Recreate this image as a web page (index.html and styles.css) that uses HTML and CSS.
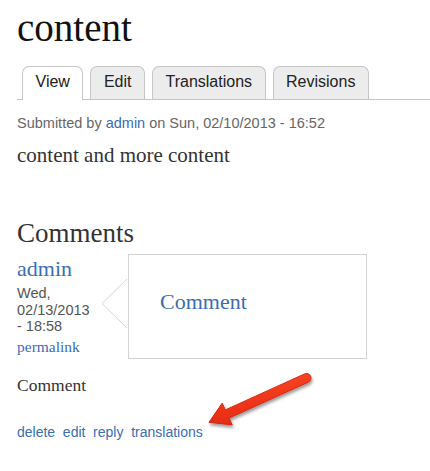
FILE: index.html
```html
<!DOCTYPE html>
<html lang="en">
<head>
<meta charset="utf-8">
<title>content</title>
<link rel="stylesheet" href="styles.css">
</head>
<body>
<div class="page">
  <h1 class="title">content</h1>
  <ul class="tabs">
    <li class="tab active">View</li>
    <li class="tab">Edit</li>
    <li class="tab">Translations</li>
    <li class="tab">Revisions</li>
  </ul>
  <p class="submitted">Submitted by <a class="link" href="#">admin</a> on Sun, 02/10/2013 - 16:52</p>
  <p class="body-text">content and more content</p>
  <h2 class="comments-title">Comments</h2>
  <div class="comment">
    <div class="comment-meta">
      <a class="author" href="#">admin</a>
      <div class="date">Wed,<br>02/13/2013<br>- 18:58</div>
      <a class="permalink" href="#">permalink</a>
    </div>
    <div class="comment-box">
      <svg class="pointer" width="28" height="52" viewBox="0 0 28 52"><polyline points="26,1 1,25.5 26,50" fill="#fff" stroke="#d6d6d6" stroke-width="1"/></svg>
      <a class="comment-subject" href="#">Comment</a>
    </div>
  </div>
  <p class="comment-body">Comment</p>
  <ul class="links">
    <li><a href="#">delete</a></li>
    <li><a href="#">edit</a></li>
    <li><a href="#">reply</a></li>
    <li><a href="#">translations</a></li>
  </ul>
  <svg class="arrow" width="430" height="471" viewBox="0 0 430 471">
    <defs>
      <filter id="sh" x="-20%" y="-40%" width="140%" height="180%">
        <feDropShadow dx="1" dy="2.5" stdDeviation="1.6" flood-color="#000" flood-opacity="0.4"/>
      </filter>
      <linearGradient id="rg" x1="0" y1="0" x2="0.3" y2="1">
        <stop offset="0" stop-color="#ff4a28"/>
        <stop offset="1" stop-color="#e42a12"/>
      </linearGradient>
    </defs>
    <path filter="url(#sh)" d="M304.6,373.9 L225.3,409.9 L222.2,403.1 L209,422.3 L232.2,424.9 L229.1,418.1 L308.4,382.1 A4.5,4.5 0 0 0 304.6,373.9 Z" fill="url(#rg)" stroke="#d42610" stroke-width="1" stroke-linejoin="round"/>
  </svg>
</div>
</body>
</html>
```

FILE: styles.css
```css
html, body {
  margin: 0;
  padding: 0;
  background: #fff;
}

.page {
  position: relative;
  width: 430px;
  height: 471px;
  overflow: hidden;
  padding: 6px 0 0 17px;
  box-sizing: border-box;
}

a {
  text-decoration: none;
}

.title {
  margin: 0;
  font-family: "Liberation Serif", serif;
  font-weight: normal;
  font-size: 39px;
  line-height: 44px;
  color: #111;
}

.tabs {
  list-style: none;
  margin: 16px 0 0 0;
  padding: 0 0 0 5px;
  display: flex;
  gap: 7px;
  border-bottom: 1px solid #c4c4c4;
  align-items: flex-end;
}

.tab {
  font-family: "Liberation Sans", Arial, sans-serif;
  font-size: 16px;
  line-height: 30px;
  padding: 0 12.5px 2px;
  color: #222;
  background: #ececec;
  border: 1px solid #c6c6c6;
  border-bottom: none;
  border-radius: 7px 7px 0 0;
}

.tab.active {
  background: #fff;
  padding-bottom: 3px;
  margin-bottom: -1px;
}

.submitted {
  margin: 14px 0 0 0;
  font-family: "Liberation Sans", Arial, sans-serif;
  font-size: 14.5px;
  line-height: 18px;
  color: #666;
}

.link,
.author,
.permalink,
.comment-subject,
.links a {
  color: #3b6db3;
}

.body-text {
  margin: 10px 0 0 0;
  font-family: "Liberation Serif", serif;
  font-size: 21px;
  line-height: 26px;
  color: #333;
}

.comments-title {
  margin: 49px 0 0 0;
  font-family: "Liberation Serif", serif;
  font-weight: normal;
  font-size: 27px;
  line-height: 32px;
  color: #333;
}

.comment {
  display: flex;
  margin-top: 5.4px;
  align-items: flex-start;
}

.comment-meta {
  width: 80px;
  padding-top: 1.3px;
  display: flex;
  flex-direction: column;
  align-items: flex-start;
}

.author {
  font-family: "Liberation Serif", serif;
  font-size: 22px;
  line-height: 26px;
}

.date {
  margin-top: 3.4px;
  font-family: "Liberation Sans", Arial, sans-serif;
  font-size: 14.5px;
  line-height: 16.5px;
  color: #555;
}

.permalink {
  margin-top: 3.3px;
  font-family: "Liberation Serif", serif;
  font-size: 15.5px;
  line-height: 18px;
}

.comment-box {
  position: relative;
  margin-left: 31px;
  width: 239px;
  height: 105px;
  box-sizing: border-box;
  border: 1px solid #d3d3d3;
  padding: 33.6px 0 0 31px;
}

.pointer {
  position: absolute;
  left: -28px;
  top: 23px;
}

.comment-subject {
  display: block;
  font-family: "Liberation Serif", serif;
  font-size: 22px;
  line-height: 26px;
}

.comment-body {
  margin: 15px 0 0 0;
  font-family: "Liberation Serif", serif;
  font-size: 17.5px;
  line-height: 22px;
  color: #333;
}

.links {
  list-style: none;
  margin: 26.8px 0 0 0;
  padding: 0;
  display: flex;
  gap: 7.7px;
  font-family: "Liberation Sans", Arial, sans-serif;
  font-size: 14px;
  line-height: 18px;
}

.arrow {
  position: absolute;
  left: 0;
  top: 0;
  pointer-events: none;
}
```
